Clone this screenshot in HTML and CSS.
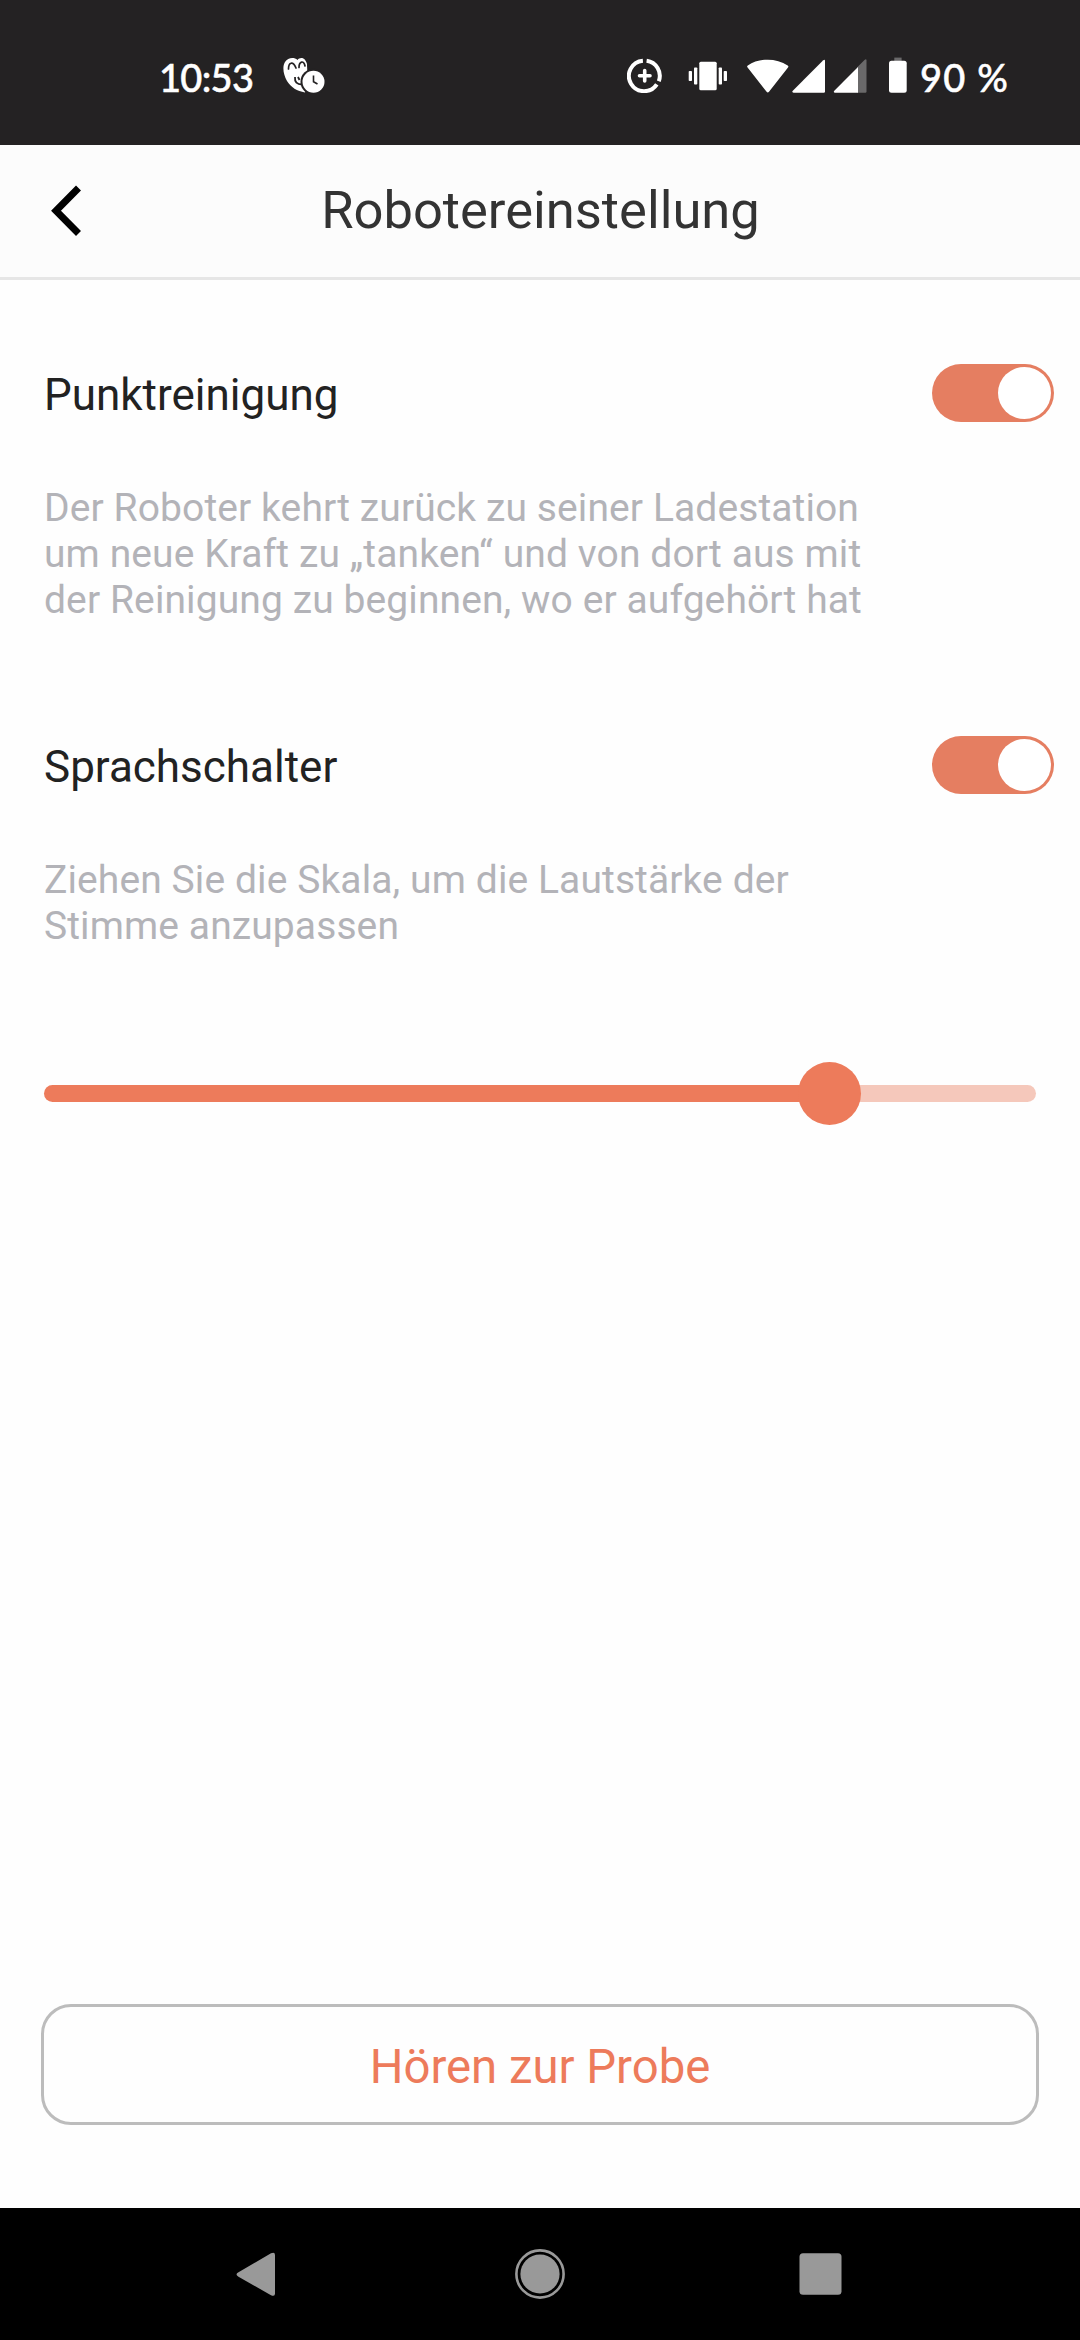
FILE: index.html
```html
<!DOCTYPE html>
<html lang="de">
<head>
<meta charset="utf-8">
<title>Robotereinstellung</title>
<link rel="stylesheet" href="styles.css">
</head>
<body>
<div class="statusbar">
  <div class="status-left">
    <span class="status-text time">10:53</span>
    <svg class="notification" width="42" height="36" viewBox="0 0 42 36">
      <path d="M14.5 3C11 0 5 .5 2 5C-1 10 .5 18 4 24C8 30.500 14 34 22 35.500C26 30 24 12 24 7C22 0 17 0 14.500 3Z" fill="#fff"/>
      <path d="M5.500 12C5.500 5 10 4 13 11M16 10.500C16 4 21 3 22 9" fill="none" stroke="#242223" stroke-width="1.700" stroke-linecap="round"/>
      <path d="M12 20C11.500 25 14 27.500 19 27.500M15 20L16.500 23" fill="none" stroke="#242223" stroke-width="1.800"/>
      <circle cx="30.500" cy="24.700" r="13" fill="#242223"/>
      <circle cx="30.500" cy="24.700" r="11" fill="#fff"/>
      <path d="M30.500 18.500V24.700L34.500 27" fill="none" stroke="#242223" stroke-width="1.600"/>
    </svg>
  </div>
  <div class="status-right">
    <svg class="saver" width="36" height="36" viewBox="0 0 36 36" fill="none" stroke="#fff">
      <path d="M19.600 3.800A15.200 15.200 0 0 1 31.800 24.200M29.800 27.300A15.200 15.200 0 1 1 15.900 3.800" stroke-width="4"/>
      <path d="M17.700 13.500V24M12.500 18.700H23" stroke-width="3.600" stroke-linecap="round"/>
    </svg>
    <svg class="vibrate" width="40" height="36" viewBox="0 0 40 36" fill="#fff">
      <rect x="11.300" y="4.700" width="17.400" height="28.500" rx="1.500"/>
      <rect x="6" y="10.500" width="3.300" height="17" rx=".8"/>
      <rect x=".7" y="14" width="3.300" height="10" rx=".8"/>
      <rect x="30.700" y="10.500" width="3.300" height="17" rx=".8"/>
      <rect x="35.700" y="14" width="3.300" height="10" rx=".8"/>
    </svg>
    <svg class="wifi" width="42" height="36" viewBox="0 0 42 36" fill="#fff">
      <path d="M.6 10.500C-.1 9.800 0 9 .8 8.400C12 .8 29.500 .8 40.700 8.400C41.500 9 41.600 9.800 41 10.500L22 34.800Q20.800 36.200 19.600 34.800Z"/>
    </svg>
    <svg class="signal" width="34" height="36" viewBox="0 0 34 36" fill="#fff">
      <path d="M1.500 35.700Q-.5 35.300 .8 33.700L31 3.500Q33 1.800 33 4V34.500Q33 35.700 31.800 35.700Z"/>
    </svg>
    <svg class="signal" width="34" height="36" viewBox="0 0 34 36" fill="#fff">
      <path d="M24.500 10L31.500 3Q33.500 1.300 33.500 3.500V34.500Q33.500 35.700 32.300 35.700H24.500Z" fill="#6a696a"/>
      <path d="M2 35.700Q0 35.300 1.300 33.700L25 10V35.700Z"/>
    </svg>
    <svg class="battery" width="18" height="36" viewBox="0 0 18 36">
      <rect x="5.300" y=".6" width="7.300" height="4" fill="#6a696a"/>
      <rect x="0" y="3.800" width="17.700" height="32" rx="2.500" fill="#fff"/>
    </svg>
    <span class="status-text percent">90 %</span>
  </div>
</div>

<header class="header">
  <svg class="back" width="32" height="52" viewBox="0 0 32 52">
    <path d="M27.500 3L5 25.800L27.500 48.500" fill="none" stroke="#000" stroke-width="7"/>
  </svg>
  <h1>Robotereinstellung</h1>
</header>

<main class="content">
  <section class="setting">
    <div class="setting-row">
      <h2>Punktreinigung</h2>
      <div class="toggle"><span class="knob"></span></div>
    </div>
    <p>Der Roboter kehrt zurück zu seiner Ladestation<br>um neue Kraft zu „tanken“ und von dort aus mit<br>der Reinigung zu beginnen, wo er aufgehört hat</p>
  </section>
  <section class="setting">
    <div class="setting-row">
      <h2>Sprachschalter</h2>
      <div class="toggle"><span class="knob"></span></div>
    </div>
    <p>Ziehen Sie die Skala, um die Lautstärke der<br>Stimme anzupassen</p>
  </section>
  <div class="slider">
    <div class="slider-fill"></div>
    <div class="slider-thumb"></div>
    <div class="slider-rest"></div>
  </div>
  <button class="probe">Hören zur Probe</button>
</main>

<nav class="navbar">
  <svg width="50" height="50" viewBox="0 0 50 50">
    <path d="M3.500 23.300L36 4.300Q40 2.500 40 6V44.500Q40 48 36 46.200L3.500 27.700Q-.5 25.500 3.500 23.300Z" fill="#999"/>
  </svg>
  <svg width="50" height="50" viewBox="0 0 50 50">
    <circle cx="25" cy="25" r="23.600" fill="none" stroke="#999" stroke-width="2.600"/>
    <circle cx="25" cy="25" r="19.600" fill="#999"/>
  </svg>
  <svg width="50" height="50" viewBox="0 0 50 50">
    <rect x="4.500" y="4.300" width="42" height="41.500" rx="3.500" fill="#999"/>
  </svg>
</nav>
</body>
</html>
```
FILE: styles.css
```css
* {
  box-sizing: border-box;
}
body {
  margin: 0;
  height: 2340px;
  display: flex;
  flex-direction: column;
  background: #fefefe;
  font-family: Roboto, sans-serif;
}
h1, h2, p {
  margin: 0;
  font-weight: 400;
}
svg {
  display: block;
  flex: none;
}

/* status bar */
.statusbar {
  height: 145px;
  padding: 57px 71px 0 159px;
  display: flex;
  justify-content: space-between;
  background: #242223;
}
.status-left, .status-right {
  display: flex;
  height: 36px;
}
.status-text {
  font-family: Lato, sans-serif;
  font-weight: 500;
  font-size: 38px;
  line-height: 41px;
  color: #fff;
  white-space: nowrap;
  -webkit-text-stroke: 0.5px #fff;
}
.time {
  width: 124px;
  letter-spacing: -0.7px;
}
.percent {
  width: 89px;
  letter-spacing: 1.2px;
}
.vibrate {
  margin-left: 25px;
}
.wifi {
  margin-left: 19px;
}
.signal {
  margin-left: 3px;
}
.signal + .signal {
  margin-left: 7px;
}
.battery {
  margin: 0 13px 0 22px;
}

/* header */
.header {
  height: 135px;
  padding-left: 51px;
  display: flex;
  align-items: center;
  background: #fcfcfc;
  border-bottom: 3px solid #e6e6e6;
}
.header h1 {
  flex: 1;
  padding: 0 82px 2px 0;
  text-align: center;
  font-size: 52.5px;
  line-height: 60px;
  color: #333;
}

/* settings */
.content {
  flex: 1;
  display: flex;
  flex-direction: column;
  padding: 84px 41px 83px 44px;
}
.setting {
  height: 372px;
}
.setting-row {
  display: flex;
  justify-content: space-between;
  align-items: center;
  height: 58px;
  margin-right: -15px;
}
.setting h2 {
  padding-top: 4px;
  font-size: 44px;
  line-height: 60px;
  color: #222;
}
.setting p {
  margin-top: 63px;
  font-size: 39px;
  letter-spacing: 0.1px;
  line-height: 46px;
  color: #b3b3b8;
}
.toggle {
  width: 122px;
  height: 58px;
  padding: 3px;
  display: flex;
  justify-content: flex-end;
  border-radius: 29px;
  background: #e57e61;
}
.knob {
  width: 53px;
  height: 52px;
  border-radius: 50%;
  background: #fff;
}
.slider {
  display: flex;
  align-items: center;
  width: 992px;
  height: 63px;
  margin-top: -46px;
}
.slider-fill {
  width: 760px;
  height: 17px;
  border-radius: 9px 0 0 9px;
  background: #ed7b5b;
}
.slider-thumb {
  width: 63px;
  height: 63px;
  margin: 0 -6px;
  border-radius: 50%;
  background: #ed7b5b;
  z-index: 1;
}
.slider-rest {
  flex: 1;
  height: 17px;
  border-radius: 0 9px 9px 0;
  background: #f5c8bb;
}
.probe {
  height: 121px;
  margin: auto 0 0 -3px;
  padding-top: 5px;
  border: 3px solid #bcbcbc;
  border-radius: 30px;
  background: none;
  font-family: inherit;
  font-size: 47.3px;
  color: #ed7b5b;
}

/* navigation bar */
.navbar {
  height: 132px;
  display: flex;
  justify-content: center;
  align-items: center;
  gap: 230px;
  background: #000;
}
```
